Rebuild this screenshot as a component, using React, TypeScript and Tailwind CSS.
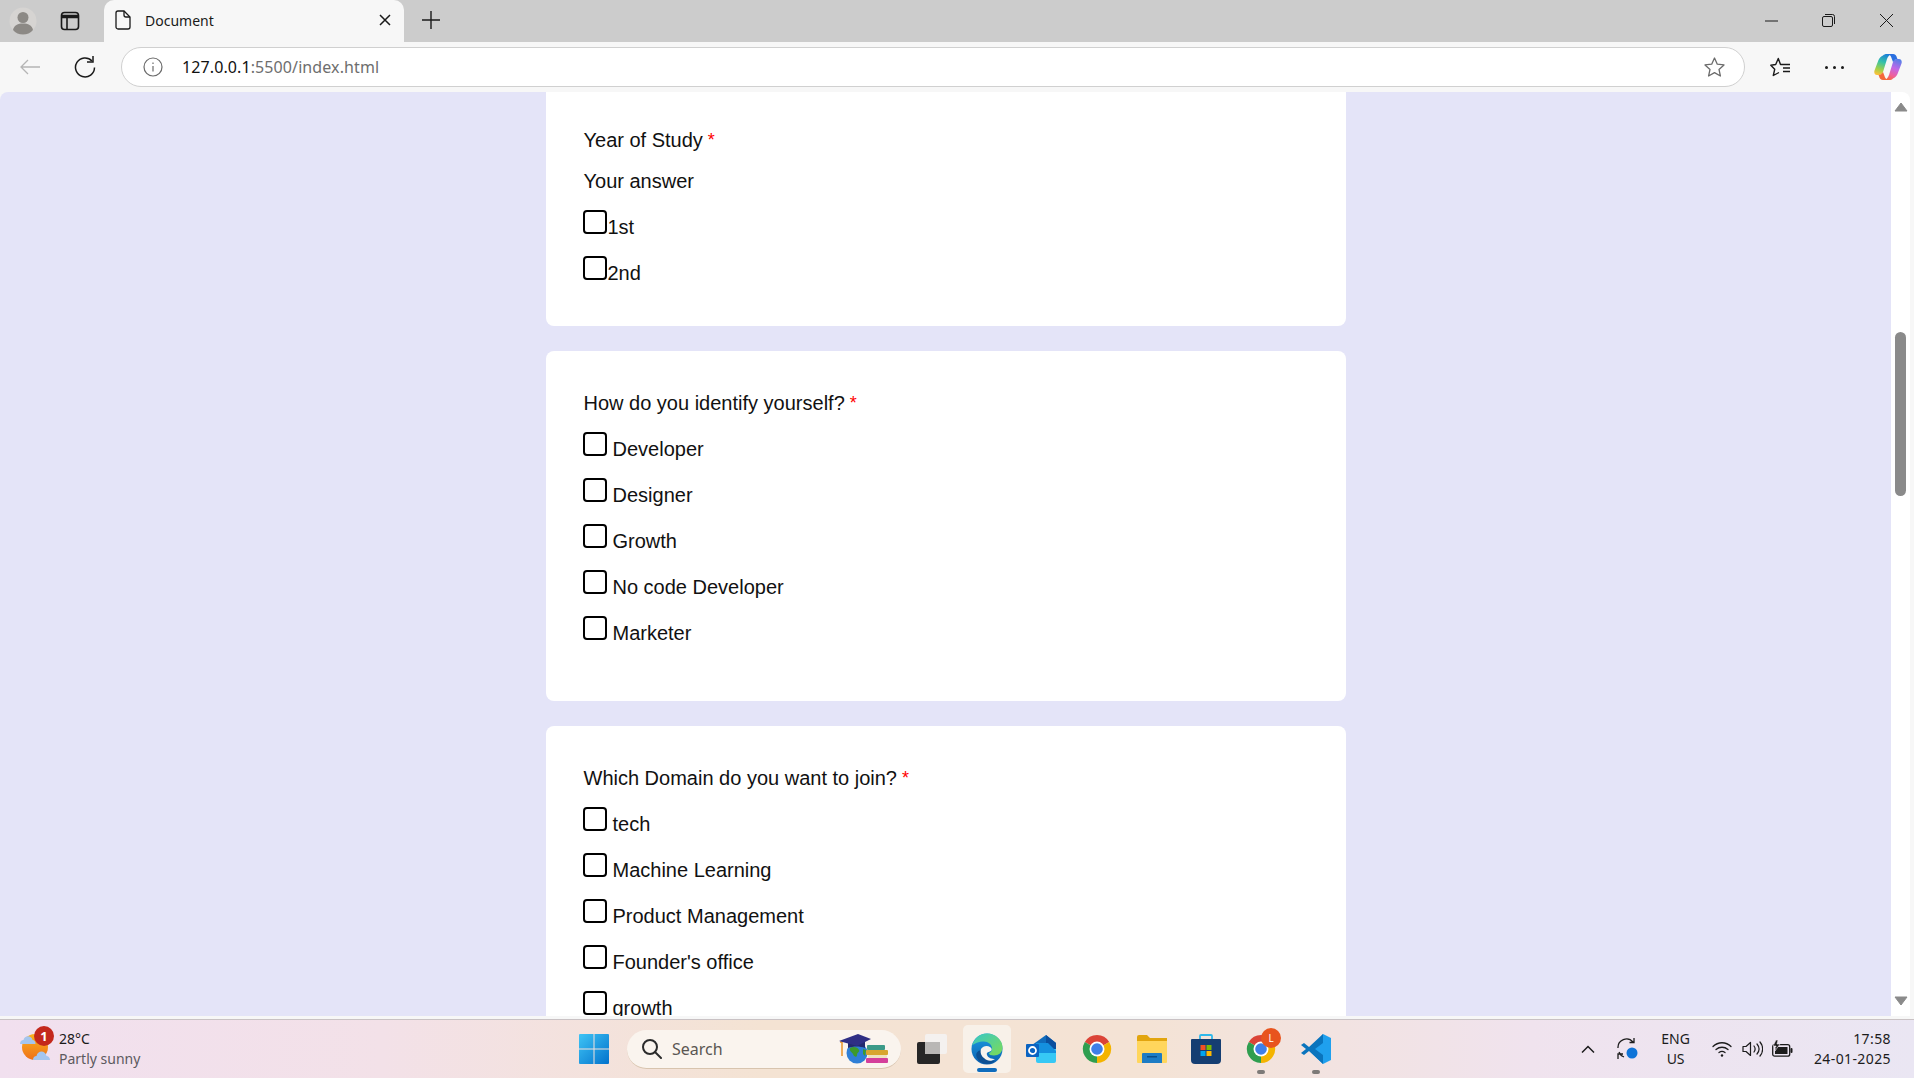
import React from "react";

const UI = "font-['Noto_Sans',sans-serif]";

function Option({ label, tight }: { label: string; tight?: boolean }) {
  return (
    <div className="flex h-[46px] items-center">
      <span className="-ml-px mb-[10px] h-[24px] w-[24px] shrink-0 rounded-[4px] border-2 border-black bg-white" />
      <span className={tight ? "ml-px" : "ml-[6px]"}>{label}</span>
    </div>
  );
}

function Title({ text }: { text: string }) {
  return (
    <div className="flex h-[46px] items-center">
      {text}
      <span className="ml-[5px] text-[18px] text-[#ff0000]">*</span>
    </div>
  );
}

function Person() {
  return (
    <svg width="28" height="28" viewBox="0 0 28 28">
      <circle cx="14" cy="14" r="13.5" fill="#d6d4d2" />
      <circle cx="14" cy="10.5" r="5.5" fill="#8c8985" />
      <path d="M4 23c1-5 5-6.500 10-6.500S23 18 24 23c-2.500 3-6 4.500-10 4.500S6.500 26 4 23z" fill="#8c8985" />
    </svg>
  );
}

function TabsIcon() {
  return (
    <svg width="20" height="20" viewBox="0 0 20 20" fill="none" stroke="#1a1a1a" strokeWidth="1.600">
      <rect x="1.500" y="1.500" width="17" height="17" rx="3" />
      <path d="M1.500 5.500h17" strokeWidth="3.500" />
      <path d="M7 6v12" />
    </svg>
  );
}

function DocIcon() {
  return (
    <svg width="16" height="20" viewBox="0 0 16 20" fill="none" stroke="#1a1a1a" strokeWidth="1.300">
      <path d="M3 1h6l6 6v10a2 2 0 0 1-2 2H3a2 2 0 0 1-2-2V3a2 2 0 0 1 2-2z" />
      <path d="M9 1v4a2 2 0 0 0 2 2h4" />
    </svg>
  );
}

function Weather() {
  return (
    <svg width="36" height="38" viewBox="0 0 36 38">
      <defs>
        <linearGradient id="sun" x1="0" y1="0" x2="0" y2="1">
          <stop offset="0" stopColor="#f9b31f" />
          <stop offset="1" stopColor="#ef7018" />
        </linearGradient>
      </defs>
      <circle cx="17" cy="17" r="13" fill="url(#sun)" />
      <path d="M2 14c0-2.500 1.500-4 3.500-4 1-5 8-5 9 0 2 0 3 2 3 4z" fill="#a5c6ee" />
      <path d="M15 30c0-2.500 1.500-4 3.500-4 1-6 9-6 10 0 2 0 3.500 2 3.500 4z" fill="#a5c6ee" />
    </svg>
  );
}

function SearchGlass() {
  return (
    <svg width="21" height="21" viewBox="0 0 21 21" fill="none" stroke="#2b2b2b" strokeWidth="2">
      <circle cx="9" cy="9" r="7" />
      <path d="M14 14l6 6" strokeLinecap="round" />
    </svg>
  );
}

function Edu() {
  return (
    <svg width="50" height="30" viewBox="0 0 50 30">
      <path d="M1 8l2 0v14" stroke="#e8922a" strokeWidth="1.500" fill="none" />
      <circle cx="18" cy="19" r="10.500" fill="#2f7fd6" />
      <path d="M11 14c3-2 8-1 9 2 1 2-2 2-2 5 0 3-3 2-4-1-1-2-4-3-3-6z" fill="#3d9a2b" />
      <path d="M24 15l3 1-1 6-2-2z" fill="#3d9a2b" />
      <path d="M9 8c5-2 12-2 17 0v6c-5-2-12-2-17 0z" fill="#232a6e" />
      <path d="M0 7L19 0l13 5-14 7z" fill="#2f2f85" />
      <rect x="28" y="11" width="18" height="5" rx="1" fill="#3c9a88" />
      <rect x="27" y="16" width="22" height="5" rx="1" fill="#d8a52f" />
      <rect x="29" y="21" width="19" height="3" rx="1" fill="#efe3c0" />
      <rect x="27" y="24" width="22" height="5" rx="1" fill="#d43f9b" />
    </svg>
  );
}

function WinLogo() {
  return (
    <svg width="30" height="30" viewBox="0 0 30 30">
      <defs>
        <linearGradient id="win" x1="0" y1="0" x2="1" y2="1">
          <stop offset="0" stopColor="#3fc4f5" />
          <stop offset="1" stopColor="#0272cc" />
        </linearGradient>
      </defs>
      <path d="M1 0h13.500v14.500H0V1a1 1 0 0 1 1-1zM15.500 0H29a1 1 0 0 1 1 1v13.500H15.500zM0 15.500h14.500V30H1a1 1 0 0 1-1-1zM15.500 15.500H30V29a1 1 0 0 1-1 1H15.500z" fill="url(#win)" />
    </svg>
  );
}

function TaskView() {
  return (
    <svg width="30" height="30" viewBox="0 0 30 30">
      <rect x="0" y="8" width="23" height="22" rx="2" fill="#262626" />
      <rect x="8" y="0" width="22" height="20" rx="2" fill="#f4f1ef" />
      <rect x="8" y="8" width="15" height="12" fill="#b9b7b5" />
    </svg>
  );
}

function Edge() {
  return (
    <svg width="32" height="32" viewBox="0 0 32 32">
      <defs>
        <linearGradient id="e1" x1="0" y1="0" x2="1" y2="1">
          <stop offset="0" stopColor="#36c7c9" />
          <stop offset="1" stopColor="#7ddc55" />
        </linearGradient>
        <linearGradient id="e2" x1="0" y1="0" x2="0" y2="1">
          <stop offset="0" stopColor="#1b9de2" />
          <stop offset="1" stopColor="#0a5fb0" />
        </linearGradient>
      </defs>
      <circle cx="16" cy="16" r="15.500" fill="url(#e2)" />
      <path d="M1 13C3 5 9 .5 16 .5c9 0 15.500 7 15.500 14 0 5-4 8-8.500 8-3 0-5-1-5-2 0-1 3-1 3-5 0-4-4-7-8-7-5 0-10 2-12.500 4.500z" fill="url(#e1)" />
      <path d="M12 17c-1 6 4 11 12 11-6 5-15 3-18-3-2-4 0-8 6-8z" fill="#0c4f92" />
      <path d="M10 16c2-3 6-4 9-2 2 1 2 3 1 4-2 1-5 1-4 4 1 3 5 4 8 4-4 3-8 2-11-1-3-2-4-6-3-9z" fill="#f7f3ee" />
    </svg>
  );
}

function Outlook() {
  return (
    <svg width="32" height="28" viewBox="0 0 32 28">
      <path d="M6 10L20 0l10 8v6H6z" fill="#0f6cbd" />
      <path d="M20 0l10 8v8H20z" fill="#0a4f9e" />
      <path d="M10 14h20v12a2 2 0 0 1-2 2H12a2 2 0 0 1-2-2z" fill="#36c8f5" />
      <path d="M10 8h12l8 8v2H10z" fill="#1490df" />
      <rect x="0" y="9" width="13" height="13" rx="1" fill="#0b63c1" />
      <circle cx="6.500" cy="15.500" r="3.500" fill="none" stroke="#fff" strokeWidth="1.800" />
    </svg>
  );
}

function Chrome() {
  return (
    <svg width="30" height="30" viewBox="0 0 32 32">
      <path d="M16 16L3 8.500A15 15 0 0 1 29 8.500z" fill="#db4437" />
      <path d="M16 16L29 8.500A15 15 0 0 1 16 31z" fill="#f4b400" />
      <path d="M16 16L16 31A15 15 0 0 1 3 8.500z" fill="#2f9e4f" />
      <circle cx="16" cy="16" r="8" fill="#fff" />
      <circle cx="16" cy="16" r="6.200" fill="#3f7fe8" />
    </svg>
  );
}

function Folder() {
  return (
    <svg width="30" height="28" viewBox="0 0 30 28">
      <path d="M0 2a2 2 0 0 1 2-2h8l3 3h17v24H0z" fill="#e2a50e" />
      <path d="M0 6h30v21a1 1 0 0 1-1 1H1a1 1 0 0 1-1-1z" fill="#ffd65c" />
      <path d="M5 19a1 1 0 0 1 1-1h18a1 1 0 0 1 1 1v9H5z" fill="#1d7cc4" />
      <rect x="10" y="21" width="10" height="1.500" fill="#0b4f8a" />
    </svg>
  );
}

function Store() {
  return (
    <svg width="30" height="30" viewBox="0 0 30 30">
      <path d="M9 5V2a1 1 0 0 1 1-1h10a1 1 0 0 1 1 1v3" fill="none" stroke="#2fb8ea" strokeWidth="1.800" />
      <path d="M1 5h28a1 1 0 0 1 1 1v20a4 4 0 0 1-4 4H4a4 4 0 0 1-4-4V6a1 1 0 0 1 1-1z" fill="#153e72" />
      <rect x="9.500" y="11" width="5" height="5" fill="#f25022" />
      <rect x="15.500" y="11" width="5" height="5" fill="#7fba00" />
      <rect x="9.500" y="17" width="5" height="5" fill="#00a4ef" />
      <rect x="15.500" y="17" width="5" height="5" fill="#ffb900" />
    </svg>
  );
}

function VSCode() {
  return (
    <svg width="30" height="30" viewBox="0 0 30 30">
      <path d="M22 0l8 4v22l-8 4L8 16.500z" fill="#1fa0ee" />
      <path d="M22 0L8 13l-5-4-3 2 5 4-5 4 3 2 5-4 14 13V21l-8-6 8-6z" fill="#0a74bd" />
    </svg>
  );
}

function Copilot() {
  return (
    <svg width="28" height="26" viewBox="0 0 28 26">
      <defs>
        <linearGradient id="c1" x1="0.600" y1="0" x2="0.300" y2="1">
          <stop offset="0" stopColor="#1a7fd8" />
          <stop offset="0.400" stopColor="#35c2a8" />
          <stop offset="0.750" stopColor="#9ed04a" />
          <stop offset="1" stopColor="#f7c13a" />
        </linearGradient>
        <linearGradient id="c2" x1="0.700" y1="0" x2="0.300" y2="1">
          <stop offset="0" stopColor="#5a7fe8" />
          <stop offset="0.400" stopColor="#c067e8" />
          <stop offset="0.750" stopColor="#f0609a" />
          <stop offset="1" stopColor="#f4683a" />
        </linearGradient>
      </defs>
      <path d="M9 1.500C10 .5 11 0 13 0h6c-3 0-5 2-6 5l-4 13c-.5 2-2 3-4 3H3c-2 0-3.300-2-2.500-4.500l4-10.500C5.500 3.500 7 2.500 9 1.500z" fill="url(#c1)" />
      <path d="M19 24.500c-1 1-2 1.500-4 1.500H9c3 0 5-2 6-5l4-13c.5-2 2-3 4-3h2c2 0 3.300 2 2.500 4.500l-4 10.500c-1 2.500-2.500 3.500-4.500 4.500z" fill="url(#c2)" />
      <path d="M13 0h6c2 0 3.500 1.500 4 4l.5 1c-2 0-3.500 1-4.500 3L17.500 4C17 2 15.500 0 13 0z" fill="#2a6fe0" />
      <path d="M15 26H9c-2 0-3.500-1.500-4-4l-.5-1c2 0 3.500-1 4.500-3l1.500 4c.5 2 2 4 4.500 4z" fill="#f4683a" />
    </svg>
  );
}

function Sync() {
  return (
    <svg width="22" height="24" viewBox="0 0 22 24" fill="none" stroke="#1c1c1c" strokeWidth="1.300">
      <path d="M1 11a8.500 8.500 0 0 1 15-6M17 1v4.500h-4.500" />
      <path d="M2 15a8.500 8.500 0 0 0 5 5M1 22v-5h5" />
      <circle cx="15" cy="16" r="5.500" fill="#0f74d8" stroke="none" />
    </svg>
  );
}

function Wifi() {
  return (
    <svg width="20" height="16" viewBox="0 0 20 16" fill="none" stroke="#1c1c1c" strokeWidth="1.300" strokeLinecap="round">
      <path d="M1 5.500c5-5 13-5 18 0M4 8.500c3.500-3 8.500-3 12 0M7 11.500c2-1.500 4-1.500 6 0" />
      <circle cx="10" cy="14.500" r="1.200" fill="#1c1c1c" stroke="none" />
    </svg>
  );
}

function Volume() {
  return (
    <svg width="21" height="18" viewBox="0 0 21 18" fill="none" stroke="#1c1c1c" strokeWidth="1.200" strokeLinecap="round" strokeLinejoin="round">
      <path d="M1 6.500h3L8.500 2.500v13L4 11.500H1z" />
      <path d="M12 6c1.500 2 1.500 4 0 6M15 4c2.500 3 2.500 7 0 10M18 2c3.500 4 3.500 10 0 14" />
    </svg>
  );
}

function Battery() {
  return (
    <svg width="21" height="18" viewBox="0 0 21 18">
      <rect x="0.700" y="4.700" width="17" height="11.500" rx="2" fill="none" stroke="#1c1c1c" strokeWidth="1.300" />
      <rect x="3" y="7" width="12.500" height="7" fill="#1c1c1c" />
      <rect x="18.500" y="8" width="2" height="5" rx="1" fill="#1c1c1c" />
      <path d="M4 0L1 6h3l-1 5 5-7H5l1-4z" fill="#1c1c1c" stroke="#f0e5f0" strokeWidth="0.600" />
    </svg>
  );
}

function Arrow({ up }: { up?: boolean }) {
  return (
    <svg width="14" height="10" viewBox="0 0 14 10">
      <path d={up ? "M7 1l6 8H1z" : "M7 9L1 1h12z"} fill="#8a8a8a" stroke="#8a8a8a" strokeWidth="1" strokeLinejoin="round" />
    </svg>
  );
}

export default function App() {
  return (
    <div className="flex h-[1078px] w-[1914px] flex-col overflow-hidden bg-[#f7f7f7] text-black">
      <header className={`flex h-[42px] shrink-0 items-stretch bg-[#cccccc] ${UI}`}>
        <div className="flex w-[104px] items-center pb-px pl-[9px]">
          <Person />
          <span className="ml-[23px]">
            <TabsIcon />
          </span>
        </div>
        <div className="flex w-[300px] items-center rounded-t-[10px] bg-[#f7f7f7] pb-[2px] pl-[11px] pr-[13px] text-[14px] text-[#1a1a1a]">
          <DocIcon />
          <span className="ml-[14px] flex-1">Document</span>
          <svg width="12" height="12" viewBox="0 0 12 12" stroke="#1a1a1a" strokeWidth="1.500">
            <path d="M1 1l10 10M11 1L1 11" />
          </svg>
        </div>
        <div className="ml-[18px] flex items-center pb-[2px]">
          <svg width="18" height="18" viewBox="0 0 18 18" stroke="#1a1a1a" strokeWidth="1.400">
            <path d="M9 0v18M0 9h18" />
          </svg>
        </div>
        <div className="ml-auto flex items-center pb-px pr-[21px]">
          <svg width="13" height="2" viewBox="0 0 13 2" stroke="#1a1a1a">
            <path d="M0 1h13" />
          </svg>
          <svg className="ml-[44px]" width="13" height="13" viewBox="0 0 13 13" fill="none" stroke="#1a1a1a">
            <rect x="0.500" y="2.500" width="10" height="10" rx="1.500" />
            <path d="M3 .5h7.500a2 2 0 0 1 2 2V10" />
          </svg>
          <svg className="ml-[45px]" width="13" height="13" viewBox="0 0 13 13" stroke="#1a1a1a">
            <path d="M0 0l13 13M13 0L0 13" />
          </svg>
        </div>
      </header>

      <nav className={`flex h-[50px] shrink-0 items-center pl-[20px] pr-[12px] ${UI}`}>
        <svg width="20" height="16" viewBox="0 0 20 16" fill="none" stroke="#b5b5b5" strokeWidth="1.300">
          <path d="M20 8H1M8 1L1 8l7 7" />
        </svg>
        <svg className="ml-[34px]" width="22" height="22" viewBox="0 0 22 22" fill="none" stroke="#1a1a1a" strokeWidth="1.500">
          <path d="M18 5a9.500 9.500 0 1 0 2.500 6.500" />
          <path d="M19 0v6h-6" />
        </svg>
        <div className="ml-[25px] flex h-[40px] flex-1 items-center rounded-[20px] border border-[#d0d0d0] bg-white pl-[21px] pr-[19px]">
          <svg width="20" height="20" viewBox="0 0 20 20" fill="none" stroke="#6b6b6b" strokeWidth="1.200">
            <circle cx="10" cy="10" r="9" />
            <path d="M10 9v5.500M10 5.500v1.500" />
          </svg>
          <span className="ml-[19px] text-[16px] tracking-[0.1px] text-[#6e6e6e]">
            <span className="text-[#111111]">127.0.0.1</span>:5500/index.html
          </span>
          <svg className="ml-auto" width="21" height="20" viewBox="0 0 21 20" fill="none" stroke="#6b6b6b" strokeWidth="1.300" strokeLinejoin="round">
            <path d="M10.500 1l2.800 6.200 6.700.7-5 4.500 1.400 6.600-5.900-3.400L4.600 19l1.400-6.600-5-4.500 6.700-.7z" />
          </svg>
        </div>
        <svg className="ml-[25px]" width="21" height="20" viewBox="0 0 21 20" fill="none" stroke="#1a1a1a" strokeWidth="1.400" strokeLinejoin="round">
          <path d="M13 7.500H10.500L8.300 1.500L5.700 7.500L.8 8.200L4.700 12.300L3.300 18.500L9 15.500" />
          <path d="M13 7.500h7M13 11h7M13 14.500h7" />
        </svg>
        <div className="ml-[34px] flex gap-[3px]">
          <span className="h-[3px] w-[3px] rounded-full bg-[#1a1a1a]" />
          <span className="ml-[2px] h-[3px] w-[3px] rounded-full bg-[#1a1a1a]" />
          <span className="ml-[2px] h-[3px] w-[3px] rounded-full bg-[#1a1a1a]" />
        </div>
        <span className="ml-[30px] flex">
          <Copilot />
        </span>
      </nav>

      <main className="flex h-[924px] shrink-0 overflow-hidden rounded-t-[8px] pr-[4px]">
        <div className="flex flex-1 flex-col items-center gap-[25px] bg-[#e4e4f8] font-['Liberation_Sans',Arial,sans-serif] text-[20px] text-[#111111]">
          <section className="h-[234px] w-[800px] shrink-0 rounded-b-[8px] bg-white pl-[38px] pt-[25px]">
            <Title text="Year of Study" />
            <div className="mb-[5px] flex h-[36px] items-center">Your answer</div>
            <Option label="1st" tight />
            <Option label="2nd" tight />
          </section>
          <section className="h-[350px] w-[800px] shrink-0 rounded-[8px] bg-white pl-[38px] pt-[29px]">
            <Title text="How do you identify yourself?" />
            <Option label="Developer" />
            <Option label="Designer" />
            <Option label="Growth" />
            <Option label="No code Developer" />
            <Option label="Marketer" />
          </section>
          <section className="w-[800px] shrink-0 rounded-[8px] bg-white pl-[38px] pt-[29px]">
            <Title text="Which Domain do you want to join?" />
            <Option label="tech" />
            <Option label="Machine Learning" />
            <Option label="Product Management" />
            <Option label="Founder's office" />
            <Option label="growth" />
          </section>
        </div>
        <div className="flex w-[19px] shrink-0 flex-col items-center rounded-tr-[8px] bg-white pb-[10px] pt-[10px]">
          <Arrow up />
          <span className="mt-[220px] h-[164px] w-[11px] rounded-full bg-[#8a8a8a]" />
          <span className="mt-auto flex">
            <Arrow />
          </span>
        </div>
      </main>

      <footer className={`mt-[3px] flex h-[59px] shrink-0 items-center border-t border-[#c9c2c4] bg-[linear-gradient(90deg,#f1e0ef_0%,#f3e1e8_20%,#f4e3d3_40%,#f4e3d5_60%,#f0e3ee_80%,#eae6f3_100%)] ${UI}`}>
        <div className="flex w-[560px] shrink-0 items-center pl-[18px]">
          <div className="relative">
            <Weather />
            <span className="absolute -top-[4px] left-[16px] flex h-[20px] w-[20px] items-center justify-center rounded-full bg-[#c4281c] text-[13px] font-bold leading-none text-white">
              1
            </span>
          </div>
          <div className="ml-[5px] flex flex-col text-[14px] leading-[20px]">
            <span className="text-[#1a1a1a]">28°C</span>
            <span className="text-[#5c5a5e]">Partly sunny</span>
          </div>
        </div>
        <div className="flex items-center">
          <span className="ml-[19px] flex">
            <WinLogo />
          </span>
          <div className="ml-[18px] flex h-[39px] w-[274px] items-center rounded-full border-b border-[#d8c4ae] bg-[#faf4ee] pl-[14px] pr-[12px]">
            <SearchGlass />
            <span className="ml-[10px] text-[16px] text-[#5a5652]">Search</span>
            <span className="ml-auto flex">
              <Edu />
            </span>
          </div>
          <span className="ml-[16px] flex">
            <TaskView />
          </span>
          <div className="relative ml-[16px] flex h-[48px] w-[48px] items-center justify-center rounded-[5px] bg-[#f8f1e9]">
            <Edge />
            <span className="absolute bottom-[1px] left-[14px] h-[4px] w-[20px] rounded-full bg-[#0f6cbd]" />
          </div>
          <span className="ml-[15px] flex w-[32px]">
            <Outlook />
          </span>
          <span className="ml-[24px] flex">
            <Chrome />
          </span>
          <span className="ml-[25px] flex">
            <Folder />
          </span>
          <span className="ml-[24px] flex">
            <Store />
          </span>
          <div className="relative ml-[25px] flex">
            <Chrome />
            <span className="absolute -right-[5px] -top-[6px] flex h-[20px] w-[20px] items-center justify-center rounded-full bg-[#e8541e] text-[10px] text-white">
              L
            </span>
            <span className="absolute -bottom-[10px] left-[11px] h-[4px] w-[8px] rounded-full bg-[#7d7a78]" />
          </div>
          <div className="relative ml-[25px] flex">
            <VSCode />
            <span className="absolute -bottom-[10px] left-[11px] h-[4px] w-[8px] rounded-full bg-[#7d7a78]" />
          </div>
        </div>
        <div className="ml-auto flex items-center pr-[23px] text-[14px] leading-[20px] text-[#1c1c1c]">
          <svg width="14" height="8" viewBox="0 0 14 8" fill="none" stroke="#1c1c1c" strokeWidth="1.500">
            <path d="M1 7.500l6-6 6 6" />
          </svg>
          <span className="ml-[22px] flex">
            <Sync />
          </span>
          <div className="ml-[22px] flex flex-col items-center">
            <span>ENG</span>
            <span>US</span>
          </div>
          <span className="ml-[22px] flex">
            <Wifi />
          </span>
          <span className="ml-[10px] flex">
            <Volume />
          </span>
          <span className="ml-[9px] flex">
            <Battery />
          </span>
          <div className="ml-[21px] flex flex-col items-end tracking-[0.4px]">
            <span>17:58</span>
            <span>24-01-2025</span>
          </div>
        </div>
      </footer>
    </div>
  );
}
